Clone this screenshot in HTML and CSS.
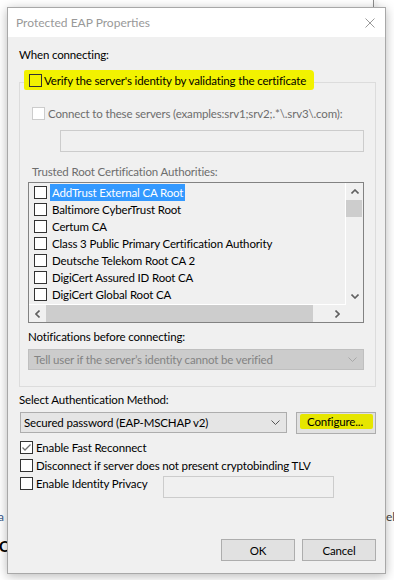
FILE: index.html
```html
<!DOCTYPE html>
<html lang="en">
<head>
    <meta charset="UTF-8">
    <meta name="viewport" content="width=device-width, initial-scale=1.0">
    <title>Protected EAP Properties</title>
    <link rel="stylesheet" href="styles.css">
</head>
<body>
    <div class="back-edge"></div>
    <span class="behind-text behind-a">a</span>
    <span class="behind-text behind-c">C</span>
    <span class="behind-text behind-el">el</span>

    <div class="dialog">
        <div class="titlebar">
            <span class="title">Protected EAP Properties</span>
            <svg class="close" width="10" height="10" viewBox="0 0 10 10">
                <path d="M0.5 0.5L9.5 9.5M9.5 0.5L0.5 9.5" stroke="#9a9a9a" stroke-width="1" fill="none"/>
            </svg>
        </div>

        <div class="content">
            <p class="label when">When connecting:</p>

            <div class="group">
                <label class="group-head"><span class="box clear"></span>Verify the server's identity by validating the certificate</label>

                <label class="check off connect"><span class="box"></span>Connect to these servers (examples:srv1;srv2;.*\.srv3\.com):</label>
                <div class="textbox servers"></div>

                <p class="label off trusted">Trusted Root Certification Authorities:</p>
                <div class="listbox">
                    <div class="list-main">
                        <ul class="items">
                            <li><span class="box"></span><span class="item-text selected">AddTrust External CA Root</span></li>
                            <li><span class="box"></span><span class="item-text">Baltimore CyberTrust Root</span></li>
                            <li><span class="box"></span><span class="item-text">Certum CA</span></li>
                            <li><span class="box"></span><span class="item-text">Class 3 Public Primary Certification Authority</span></li>
                            <li><span class="box"></span><span class="item-text">Deutsche Telekom Root CA 2</span></li>
                            <li><span class="box"></span><span class="item-text">DigiCert Assured ID Root CA</span></li>
                            <li><span class="box"></span><span class="item-text">DigiCert Global Root CA</span></li>
                        </ul>
                        <div class="vscroll">
                            <span class="arrow">
                                <svg width="8" height="5" viewBox="0 0 8 5"><path d="M0.5 4.5L4 1L7.5 4.5" stroke="#606060" stroke-width="1.6" fill="none"/></svg>
                            </span>
                            <span class="vthumb"></span>
                            <span class="vtrack"></span>
                            <span class="arrow">
                                <svg width="8" height="5" viewBox="0 0 8 5"><path d="M0.5 0.5L4 4L7.5 0.5" stroke="#606060" stroke-width="1.6" fill="none"/></svg>
                            </span>
                        </div>
                    </div>
                    <div class="hscroll">
                        <span class="arrow">
                            <svg width="5" height="8" viewBox="0 0 5 8"><path d="M4.5 0.5L1 4L4.5 7.5" stroke="#606060" stroke-width="1.6" fill="none"/></svg>
                        </span>
                        <span class="hthumb"></span>
                        <span class="arrow">
                            <svg width="5" height="8" viewBox="0 0 5 8"><path d="M0.5 0.5L4 4L0.5 7.5" stroke="#606060" stroke-width="1.6" fill="none"/></svg>
                        </span>
                        <span class="corner"></span>
                    </div>
                </div>

                <p class="label notify">Notifications before connecting:</p>
                <div class="combo off notify-combo">
                    <span>Tell user if the server’s identity cannot be verified</span>
                    <svg width="9" height="5" viewBox="0 0 9 5"><path d="M0.5 0.5L4.5 4.5L8.5 0.5" stroke="#a8a8a8" stroke-width="1" fill="none"/></svg>
                </div>
            </div>

            <p class="label method">Select Authentication Method:</p>
            <div class="method-row">
                <div class="combo method-combo">
                    <span>Secured password (EAP-MSCHAP v2)</span>
                    <svg width="9" height="5" viewBox="0 0 9 5"><path d="M0.5 0.5L4.5 4.5L8.5 0.5" stroke="#555" stroke-width="1" fill="none"/></svg>
                </div>
                <button class="btn configure"><span class="marker">Configure...</span></button>
            </div>

            <label class="check first">
                <span class="box">
                    <svg width="11" height="11" viewBox="0 0 11 11"><path d="M1.5 5.5L4 8L9.5 2.5" stroke="#707070" stroke-width="1.3" fill="none"/></svg>
                </span>Enable Fast Reconnect
            </label>
            <label class="check"><span class="box"></span>Disconnect if server does not present cryptobinding TLV</label>
            <div class="privacy-row">
                <label class="check privacy-check"><span class="box"></span>Enable Identity Privacy</label>
                <div class="textbox privacy"></div>
            </div>

            <div class="actions">
                <button class="btn">OK</button>
                <button class="btn">Cancel</button>
            </div>
        </div>
    </div>
</body>
</html>
```

FILE: styles.css
```css
* {
    box-sizing: border-box;
}
body {
    margin: 0;
    width: 394px;
    height: 580px;
    overflow: hidden;
    position: relative;
    background-color: #ffffff;
    font-family: Lato, "Noto Sans", sans-serif;
    font-size: 11.5px;
    letter-spacing: -0.15px;
    color: #000000;
}
p {
    margin: 0;
}
ul {
    margin: 0;
    padding: 0;
    list-style: none;
}

/* bits of the windows behind the dialog */
.back-edge {
    position: absolute;
    left: 373px;
    top: 0;
    width: 1px;
    height: 8px;
    background-color: #8c8c8c;
    box-shadow: 2px 0 4px rgba(0, 0, 0, 0.25);
}
.behind-text {
    position: absolute;
    line-height: 14px;
    font-size: 12px;
}
.behind-a {
    left: -2px;
    top: 510px;
    color: #3c5a8c;
}
.behind-c {
    left: -1px;
    top: 539px;
    font-size: 15px;
    font-weight: bold;
}
.behind-el {
    left: 386px;
    top: 510px;
    color: #444444;
}

.dialog {
    position: relative;
    z-index: 1;
    margin: 7px 0 0 7px;
    width: 379px;
    height: 567px;
    border: 1px solid #a8a8a8;
    background-color: #f0f0f0;
    box-shadow: 0 2px 10px rgba(0, 0, 0, 0.28);
    display: flex;
    flex-direction: column;
}
.titlebar {
    height: 29px;
    background-color: #ffffff;
    display: flex;
    align-items: center;
    justify-content: space-between;
    padding: 0 9px 0 8px;
}
.title {
    color: #999999;
    font-size: 12px;
    letter-spacing: 0;
}
.close {
    margin-right: 1px;
}

.content {
    flex: 1;
    display: flex;
    flex-direction: column;
    padding: 0 9px 12px 11px;
}
.label {
    line-height: 16px;
    white-space: nowrap;
}
.off {
    color: #6d6d6d;
}
.when {
    margin-top: 10px;
}

.box {
    flex: none;
    width: 13px;
    height: 13px;
    border: 1px solid #333333;
    background-color: #ffffff;
    display: flex;
    align-items: center;
    justify-content: center;
}
.box.clear {
    background-color: transparent;
}
.off .box {
    border-color: #cccccc;
}
.check {
    display: flex;
    align-items: center;
    height: 18px;
    gap: 3px;
    margin-left: 1px;
    white-space: nowrap;
}

.group {
    margin-top: 19px;
    border: 1px solid #dcdcdc;
    padding: 0 11px 16px 8px;
    display: flex;
    flex-direction: column;
}
.group-head {
    align-self: flex-start;
    display: flex;
    align-items: center;
    gap: 2px;
    height: 20px;
    margin: -13px 0 0 -4px;
    padding: 0 8px 0 5px;
    background-color: #f2f200;
    border-radius: 2px 4px 3px 2px;
    white-space: nowrap;
}
.connect {
    margin: 15px 0 0 4px;
    height: 16px;
}
.textbox {
    border: 1px solid #cccccc;
    background-color: #f0f0f0;
    height: 22px;
}
.servers {
    margin: 9px 0 0 32px;
}
.trusted {
    margin: 12px 0 0 4px;
}

.listbox {
    margin-top: 2px;
    height: 141px;
    border: 1px solid #828282;
    display: flex;
    flex-direction: column;
}
.list-main {
    flex: 1;
    display: flex;
    min-height: 0;
}
.items {
    flex: 1;
    overflow: hidden;
    padding: 1px 0 0 5px;
    border-right: 1px solid #ffffff;
    border-bottom: 1px solid #ffffff;
}
.items li {
    height: 17px;
    display: flex;
    align-items: center;
    gap: 3px;
    white-space: nowrap;
}
.item-text {
    padding: 0 2px;
    line-height: 17px;
}
.item-text.selected {
    background-color: #3399ff;
    color: #ffffff;
}
.vscroll {
    width: 17px;
    display: flex;
    flex-direction: column;
}
.arrow {
    flex: none;
    width: 17px;
    height: 17px;
    display: flex;
    align-items: center;
    justify-content: center;
}
.vthumb {
    flex: none;
    height: 17px;
    margin-right: 1px;
    background-color: #cdcdcd;
}
.vtrack {
    flex: 1;
}
.hscroll {
    height: 17px;
    display: flex;
}
.hthumb {
    flex: none;
    width: 267px;
    background-color: #cdcdcd;
}
.hscroll .arrow + .hthumb + .arrow {
    margin-left: auto;
}
.corner {
    width: 17px;
    flex: none;
}

.notify {
    margin-top: 6px;
}
.combo {
    height: 21px;
    display: flex;
    align-items: center;
    justify-content: space-between;
    padding: 0 6px 0 5px;
    border: 1px solid #adadad;
    background-color: #e5e5e5;
    white-space: nowrap;
}
.combo.off {
    margin-top: 4px;
    background-color: #cccccc;
    border-color: #bfbfbf;
    color: #838383;
}

.method {
    margin-top: 5px;
}
.method-row {
    margin: 4px 0 0 1px;
    display: flex;
    gap: 9px;
}
.method-combo {
    width: 267px;
    padding-left: 3px;
}
.btn {
    font-family: inherit;
    font-size: 11.5px;
    letter-spacing: -0.15px;
    color: #000000;
    height: 22px;
    width: 74px;
    padding: 0;
    border: 1px solid #adadad;
    background-color: #e1e1e1;
}
.configure {
    width: 80px;
    padding: 1px 2px 4px 3px;
}
.marker {
    display: block;
    height: 100%;
    line-height: 15px;
    text-align: left;
    padding-left: 7px;
    background-color: #e6e600;
    border-radius: 2px;
}
.first {
    margin-top: 4px;
}
.privacy-row {
    display: flex;
    align-items: flex-start;
}
.privacy-check {
    flex: none;
    width: 143px;
}
.privacy {
    margin-top: 2px;
    width: 171px;
    height: 22px;
}
.actions {
    margin-top: auto;
    display: flex;
    justify-content: flex-end;
    gap: 7px;
}
```
